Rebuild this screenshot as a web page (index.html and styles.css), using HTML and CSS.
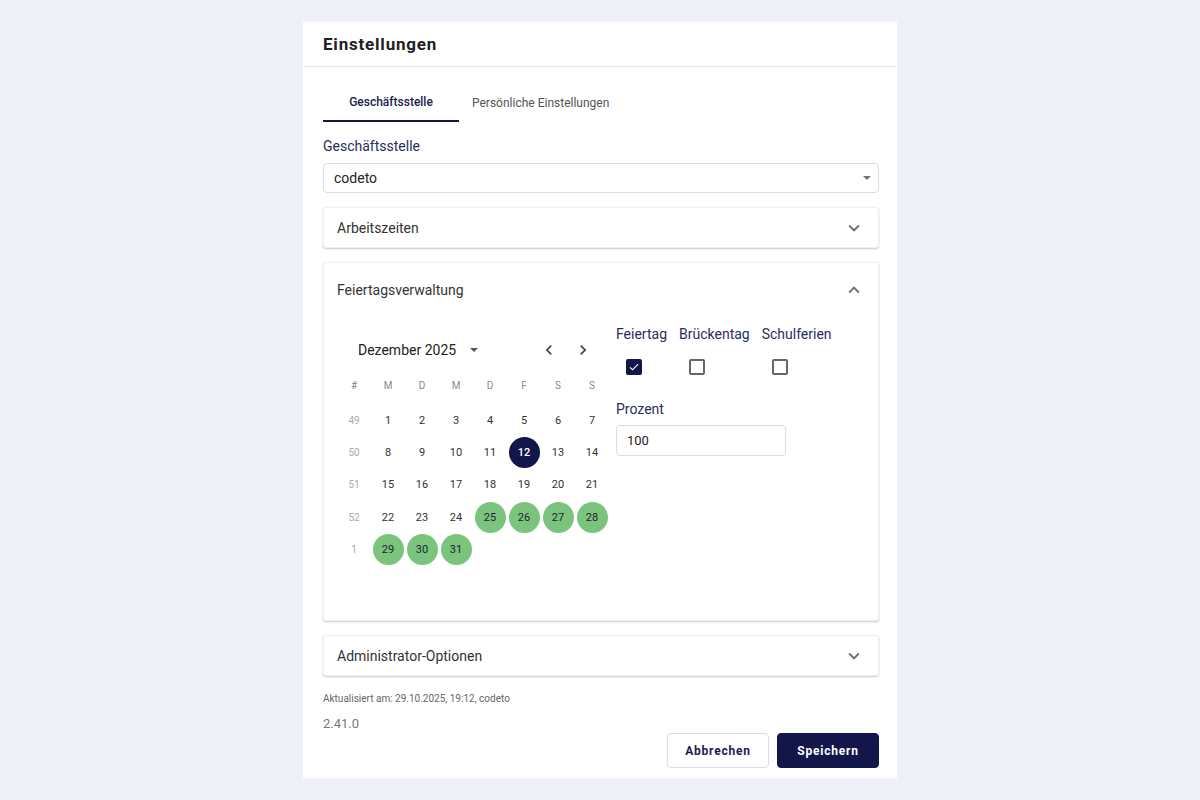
FILE: index.html
```html
<!DOCTYPE html>
<html lang="de">
<head>
  <meta charset="utf-8">
  <title>Einstellungen</title>
  <link rel="stylesheet" href="styles.css">
</head>
<body>

<div class="dialog">
  <header class="dialog-head">
    <h2>Einstellungen</h2>
  </header>

  <div class="dialog-body">

    <div class="tabs">
      <div class="tab active">Geschäftsstelle</div>
      <div class="tab">Persönliche Einstellungen</div>
    </div>

    <label class="field-label">Geschäftsstelle</label>
    <div class="select">
      <span>codeto</span>
      <span class="caret"></span>
    </div>

    <!-- Arbeitszeiten -->
    <div class="accordion">
      <div class="acc-head">
        <span>Arbeitszeiten</span>
        <svg class="chev" width="22" height="22" viewBox="0 0 24 24"><path d="M7.41 8.59 12 13.17l4.59-4.58L18 10l-6 6-6-6z"/></svg>
      </div>
    </div>

    <!-- Feiertage -->
    <div class="accordion open">
      <div class="acc-head">
        <span>Feiertagsverwaltung</span>
        <svg class="chev" width="22" height="22" viewBox="0 0 24 24"><path d="M7.41 15.41 12 10.83l4.59 4.58L18 14l-6-6-6 6z"/></svg>
      </div>
      <div class="acc-content">
        <div class="calendar">
          <div class="cal-head">
            <span class="month">Dezember 2025</span>
            <span class="caret dark"></span>
            <span class="spacer"></span>
            <svg class="nav" width="20" height="20" viewBox="0 0 24 24"><path d="M15.41 7.41 14 6l-6 6 6 6 1.41-1.41L10.83 12z"/></svg>
            <svg class="nav" width="20" height="20" viewBox="0 0 24 24"><path d="M10 6 8.59 7.41 13.17 12l-4.58 4.59L10 18l6-6z"/></svg>
          </div>
          <div class="cal-grid" id="grid"></div>
        </div>

        <div class="options">
          <div class="checks">
            <div class="check-col">
              <span class="check-label">Feiertag</span>
              <span class="box checked">
                <svg width="14" height="14" viewBox="0 0 24 24"><path d="M9 16.17 4.83 12l-1.42 1.41L9 19 21 7l-1.41-1.41z" fill="#fff"/></svg>
              </span>
            </div>
            <div class="check-col">
              <span class="check-label">Brückentag</span>
              <span class="box"></span>
            </div>
            <div class="check-col">
              <span class="check-label">Schulferien</span>
              <span class="box"></span>
            </div>
          </div>
          <label class="field-label small">Prozent</label>
          <div class="input">100</div>
        </div>
      </div>
    </div>

    <!-- Admin -->
    <div class="accordion">
      <div class="acc-head">
        <span>Administrator-Optionen</span>
        <svg class="chev" width="22" height="22" viewBox="0 0 24 24"><path d="M7.41 8.59 12 13.17l4.59-4.58L18 10l-6 6-6-6z"/></svg>
      </div>
    </div>

    <p class="updated">Aktualisiert am: 29.10.2025, 19:12, codeto</p>
    <p class="version">2.41.0</p>

    <div class="actions">
      <button type="button" class="btn">Abbrechen</button>
      <button type="button" class="btn primary">Speichern</button>
    </div>
  </div>
</div>

<script>
var grid = document.getElementById("grid")
var html = ""
var heads = ["#", "M", "D", "M", "D", "F", "S", "S"]
for (var i = 0; i < heads.length; i++) {
  html += "<span class='wd'>" + heads[i] + "</span>"
}
// december 2025 starts on a monday
var weeks = [49, 50, 51, 52, 1]
var day = 1
for (var w = 0; w < weeks.length; w++) {
  html += "<span class='wk'>" + weeks[w] + "</span>"
  for (var d = 0; d < 7; d++) {
    if (day > 31) {
      html += "<span></span>"
      continue
    }
    var cls = "day"
    if (day == 12) cls += " today"
    if (day >= 25) cls += " holiday"
    html += "<span class='" + cls + "'>" + day + "</span>"
    day++
  }
}
grid.innerHTML = html
</script>
</body>
</html>
```

FILE: styles.css
```css
* {
  box-sizing: border-box;
}

body {
  margin: 0;
  background: #edf0f7;
  font-family: Roboto, "Liberation Sans", Arial, sans-serif;
  color: #333;
}

/* dialog frame */
.dialog {
  width: 594px;
  margin: 22px auto 0;
  background: #fff;
  height: 756px;
}

.dialog-head {
  height: 45px;
  padding: 0 20px;
  display: flex;
  align-items: center;
  border-bottom: 1px solid #e4e6ea;
}

.dialog-head h2 {
  margin: 0;
  font-size: 17px;
  font-weight: 700;
  letter-spacing: 0.8px;
  color: #1f2024;
}

.dialog-body {
  padding: 16px 18px 0 20px;
}

/* tabs */
.tabs {
  display: flex;
  height: 39px;
}

.tab {
  display: flex;
  align-items: center;
  justify-content: center;
  font-size: 12px;
  color: #555;
  padding: 0 13px;
}

.tab.active {
  width: 136px;
  color: #1a1d4e;
  font-weight: 500;
  border-bottom: 2px solid #14174a;
}

.field-label {
  display: block;
  margin-top: 15px;
  font-size: 14px;
  line-height: 18px;
  color: #2a2d5c;
}

.select {
  margin-top: 8px;
  height: 30px;
  border: 1px solid #dcdde2;
  border-radius: 4px;
  padding: 0 7px 0 10px;
  display: flex;
  align-items: center;
  justify-content: space-between;
  font-size: 14px;
  color: #222;
}

.caret {
  width: 0;
  height: 0;
  border-left: 4.5px solid transparent;
  border-right: 4.5px solid transparent;
  border-top: 4.5px solid #757575;
}

.caret.dark {
  border-top-color: #555;
  margin-left: 14px;
}

/* accordions */
.accordion {
  margin-top: 14px;
  background: #fff;
  border: 1px solid #f0f0f2;
  border-radius: 3px;
  box-shadow: 0 1px 2px rgba(0, 0, 0, 0.22);
}

.acc-head {
  height: 39px;
  padding: 0 13px 0 13px;
  display: flex;
  align-items: center;
  justify-content: space-between;
  font-size: 14px;
  color: #333;
}

.accordion.open .acc-head {
  height: 53px;
}

.chev {
  fill: #6f6f6f;
}

.acc-content {
  display: flex;
  padding: 9px 0 0 13px;
  height: 304px;
}

/* calendar */
.calendar {
  width: 272px;
}

.cal-head {
  height: 50px;
  display: flex;
  align-items: center;
  padding: 0 0 0 21px;
}

.month {
  font-size: 14px;
  font-weight: 400;
  color: #222;
}

.spacer {
  flex: 1;
}

.nav {
  fill: #444;
  margin-left: 14px;
}

.nav:last-child {
  margin-right: 16px;
}

.cal-grid {
  display: grid;
  grid-template-columns: repeat(8, 34px);
  grid-template-rows: 29px repeat(5, 32.3px);
  align-items: center;
  justify-items: center;
}

.cal-grid .wd {
  font-size: 10px;
  line-height: 22px;
  color: #888;
  align-self: start;
}

.cal-grid .wk {
  font-size: 10px;
  color: #aaa;
}

.day {
  width: 31px;
  height: 31px;
  border-radius: 50%;
  display: flex;
  align-items: center;
  justify-content: center;
  font-size: 11px;
  color: #333;
}

.day.today {
  background: #13164a;
  color: #fff;
  font-weight: 500;
}

.day.holiday {
  background: #7bc47e;
  color: #223;
}

/* options right of calendar */
.options {
  margin-left: 7px;
}

.checks {
  display: flex;
  gap: 12px;
}

.check-col {
  display: flex;
  flex-direction: column;
}

.check-label {
  font-size: 14px;
  line-height: 18px;
  color: #2a2d5c;
}

.box {
  margin: 16px 0 0 10px;
  width: 16px;
  height: 16px;
  border: 2px solid #666;
  border-radius: 2px;
  display: flex;
  align-items: center;
  justify-content: center;
}

.box.checked {
  background: #13164a;
  border-color: #13164a;
}

.field-label.small {
  margin-top: 25px;
}

.input {
  margin-top: 7px;
  width: 170px;
  height: 31px;
  border: 1px solid #dcdde2;
  border-radius: 4px;
  padding: 0 10px;
  display: flex;
  align-items: center;
  font-size: 13px;
  color: #222;
}

/* footer */
.updated {
  margin: 17px 0 0;
  font-size: 10px;
  color: #666;
}

.version {
  margin: 12px 0 0;
  font-size: 13px;
  color: #777;
}

.actions {
  display: flex;
  justify-content: flex-end;
  gap: 8px;
  margin-top: 2px;
}

.btn {
  height: 35px;
  width: 102px;
  border: 1px solid #dcdde2;
  border-radius: 4px;
  background: #fff;
  font-family: inherit;
  font-size: 12px;
  font-weight: 700;
  letter-spacing: 0.8px;
  color: #1e2150;
}

.btn.primary {
  background: #13164a;
  border-color: #13164a;
  color: #fff;
}
```
